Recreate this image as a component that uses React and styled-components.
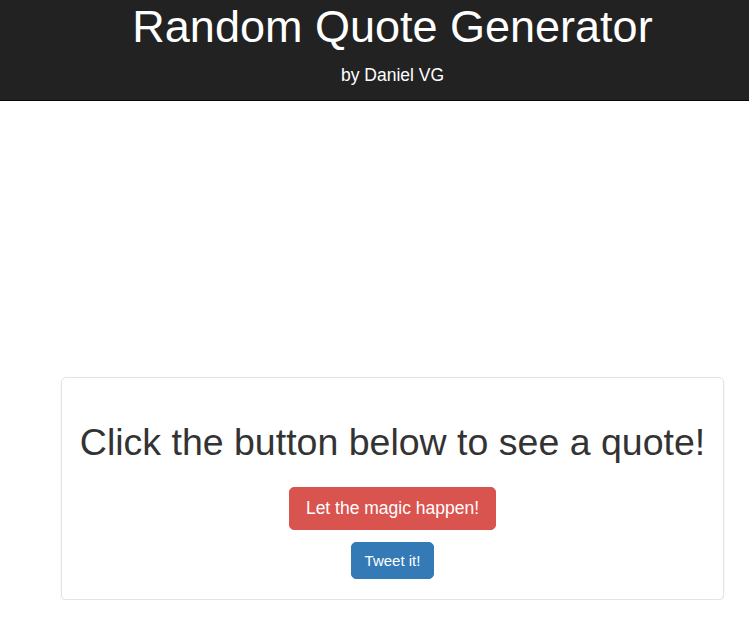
import React from "react";
import styled, { createGlobalStyle } from "styled-components";

const GlobalStyle = createGlobalStyle`
  html, body {
    margin: 0;
    padding: 0;
    background: #fff;
    font-family: "Liberation Sans", Arial, sans-serif;
    color: #333;
  }
`;

const Header = styled.header`
  background: #222;
  border-bottom: 1px solid #080808;
  height: 101px;
  box-sizing: border-box;
  padding-left: 36px;
  display: flex;
  flex-direction: column;
  align-items: center;
  color: #fff;
`;

const Title = styled.h1`
  margin: 3px 0 0;
  font-size: 45px;
  font-weight: 400;
  line-height: 48px;
  white-space: nowrap;
`;

const Subtitle = styled.p`
  margin: 14px 0 0;
  font-size: 17.5px;
  line-height: 20px;
`;

const Main = styled.main`
  padding: 276px 25px 0 61px;
`;

const Card = styled.section`
  width: 663px;
  height: 223px;
  box-sizing: border-box;
  border: 1px solid #e3e3e3;
  border-radius: 5px;
  box-shadow: 0 1px 2px rgba(0, 0, 0, 0.08);
  display: flex;
  flex-direction: column;
  align-items: center;
  padding-top: 42px;
`;

const Quote = styled.h2`
  margin: 0;
  font-size: 37.5px;
  font-weight: 400;
  line-height: 44px;
  color: #333;
  white-space: nowrap;
`;

const Button = styled.button`
  font-family: "Liberation Sans", Arial, sans-serif;
  color: #fff;
  border: 1px solid ${(p) => p.border};
  background: ${(p) => p.bg};
  border-radius: 5px;
  cursor: pointer;
  font-size: ${(p) => p.size}px;
  padding: ${(p) => p.pad};
  margin-top: ${(p) => p.top}px;
  line-height: 1.3;
`;

export default function App() {
  return (
    <>
      <GlobalStyle />
      <Header>
        <Title>Random Quote Generator</Title>
        <Subtitle>by Daniel VG</Subtitle>
      </Header>
      <Main>
        <Card>
          <Quote>Click the button below to see a quote!</Quote>
          <Button bg="#d9534f" border="#d9534f" size={17.5} pad="9px 16px" top={23}>
            Let the magic happen!
          </Button>
          <Button bg="#337ab7" border="#337ab7" size={15} pad="8px 13px" top={12}>
            Tweet it!
          </Button>
        </Card>
      </Main>
    </>
  );
}
